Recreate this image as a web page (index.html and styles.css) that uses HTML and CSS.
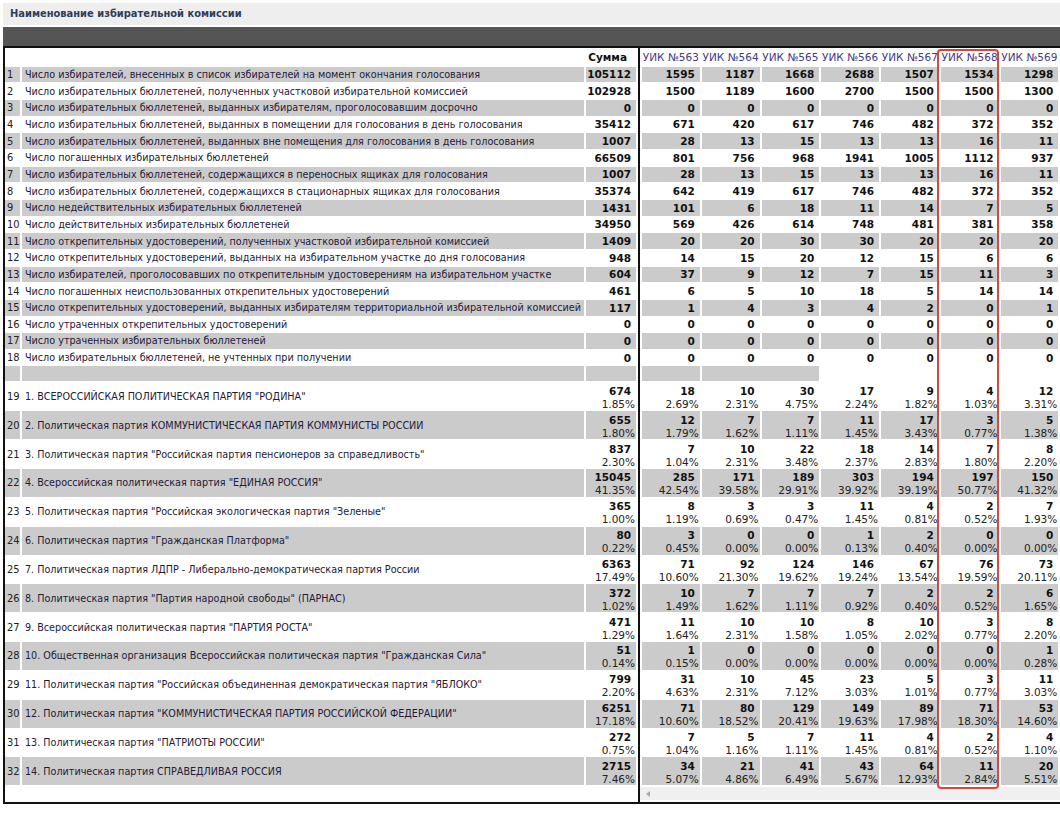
FILE: index.html
```html
<!DOCTYPE html>
<html lang="ru">
<head>
<meta charset="utf-8">
<title>Наименование избирательной комиссии</title>
<link rel="stylesheet" href="styles.css">
</head>
<body>
<div class="page">
  <div class="title">Наименование избирательной комиссии</div>
  <div class="bar"></div>
  <div class="box">
    <div class="left">
      <table class="lt">
        <colgroup><col class="c-n"><col class="c-name"><col class="c-sum"></colgroup>
        <tr class="head"><td></td><td></td><td class="v"><b>Сумма</b></td></tr>
        <tr class="r g"><td class="n">1</td><td class="name">Число избирателей, внесенных в список избирателей на момент окончания голосования</td><td class="v">105112</td></tr>
        <tr class="r"><td class="n">2</td><td class="name">Число избирательных бюллетеней, полученных участковой избирательной комиссией</td><td class="v">102928</td></tr>
        <tr class="r g"><td class="n">3</td><td class="name">Число избирательных бюллетеней, выданных избирателям, проголосовавшим досрочно</td><td class="v">0</td></tr>
        <tr class="r"><td class="n">4</td><td class="name">Число избирательных бюллетеней, выданных в помещении для голосования в день голосования</td><td class="v">35412</td></tr>
        <tr class="r g"><td class="n">5</td><td class="name">Число избирательных бюллетеней, выданных вне помещения для голосования в день голосования</td><td class="v">1007</td></tr>
        <tr class="r"><td class="n">6</td><td class="name">Число погашенных избирательных бюллетеней</td><td class="v">66509</td></tr>
        <tr class="r g"><td class="n">7</td><td class="name">Число избирательных бюллетеней, содержащихся в переносных ящиках для голосования</td><td class="v">1007</td></tr>
        <tr class="r"><td class="n">8</td><td class="name">Число избирательных бюллетеней, содержащихся в стационарных ящиках для голосования</td><td class="v">35374</td></tr>
        <tr class="r g"><td class="n">9</td><td class="name">Число недействительных избирательных бюллетеней</td><td class="v">1431</td></tr>
        <tr class="r"><td class="n">10</td><td class="name">Число действительных избирательных бюллетеней</td><td class="v">34950</td></tr>
        <tr class="r g"><td class="n">11</td><td class="name">Число открепительных удостоверений, полученных участковой избирательной комиссией</td><td class="v">1409</td></tr>
        <tr class="r"><td class="n">12</td><td class="name">Число открепительных удостоверений, выданных на избирательном участке до дня голосования</td><td class="v">948</td></tr>
        <tr class="r g"><td class="n">13</td><td class="name">Число избирателей, проголосовавших по открепительным удостоверениям на избирательном участке</td><td class="v">604</td></tr>
        <tr class="r"><td class="n">14</td><td class="name">Число погашенных неиспользованных открепительных удостоверений</td><td class="v">461</td></tr>
        <tr class="r g"><td class="n">15</td><td class="name">Число открепительных удостоверений, выданных избирателям территориальной избирательной комиссией</td><td class="v">117</td></tr>
        <tr class="r"><td class="n">16</td><td class="name">Число утраченных открепительных удостоверений</td><td class="v">0</td></tr>
        <tr class="r g"><td class="n">17</td><td class="name">Число утраченных избирательных бюллетеней</td><td class="v">0</td></tr>
        <tr class="r"><td class="n">18</td><td class="name">Число избирательных бюллетеней, не учтенных при получении</td><td class="v">0</td></tr>
        <tr class="sep g"><td></td><td></td><td></td></tr>
        <tr class="p"><td class="n">19</td><td class="name">1. ВСЕРОССИЙСКАЯ ПОЛИТИЧЕСКАЯ ПАРТИЯ "РОДИНА"</td><td class="v"><b>674</b><i>1.85%</i></td></tr>
        <tr class="p g"><td class="n">20</td><td class="name">2. Политическая партия КОММУНИСТИЧЕСКАЯ ПАРТИЯ КОММУНИСТЫ РОССИИ</td><td class="v"><b>655</b><i>1.80%</i></td></tr>
        <tr class="p"><td class="n">21</td><td class="name">3. Политическая партия "Российская партия пенсионеров за справедливость"</td><td class="v"><b>837</b><i>2.30%</i></td></tr>
        <tr class="p g"><td class="n">22</td><td class="name">4. Всероссийская политическая партия "ЕДИНАЯ РОССИЯ"</td><td class="v"><b>15045</b><i>41.35%</i></td></tr>
        <tr class="p"><td class="n">23</td><td class="name">5. Политическая партия "Российская экологическая партия "Зеленые"</td><td class="v"><b>365</b><i>1.00%</i></td></tr>
        <tr class="p g"><td class="n">24</td><td class="name">6. Политическая партия "Гражданская Платформа"</td><td class="v"><b>80</b><i>0.22%</i></td></tr>
        <tr class="p"><td class="n">25</td><td class="name">7. Политическая партия ЛДПР - Либерально-демократическая партия России</td><td class="v"><b>6363</b><i>17.49%</i></td></tr>
        <tr class="p g"><td class="n">26</td><td class="name">8. Политическая партия "Партия народной свободы" (ПАРНАС)</td><td class="v"><b>372</b><i>1.02%</i></td></tr>
        <tr class="p"><td class="n">27</td><td class="name">9. Всероссийская политическая партия "ПАРТИЯ РОСТА"</td><td class="v"><b>471</b><i>1.29%</i></td></tr>
        <tr class="p g"><td class="n">28</td><td class="name">10. Общественная организация Всероссийская политическая партия "Гражданская Сила"</td><td class="v"><b>51</b><i>0.14%</i></td></tr>
        <tr class="p"><td class="n">29</td><td class="name">11. Политическая партия "Российская объединенная демократическая партия "ЯБЛОКО"</td><td class="v"><b>799</b><i>2.20%</i></td></tr>
        <tr class="p g"><td class="n">30</td><td class="name">12. Политическая партия "КОММУНИСТИЧЕСКАЯ ПАРТИЯ РОССИЙСКОЙ ФЕДЕРАЦИИ"</td><td class="v"><b>6251</b><i>17.18%</i></td></tr>
        <tr class="p"><td class="n">31</td><td class="name">13. Политическая партия "ПАТРИОТЫ РОССИИ"</td><td class="v"><b>272</b><i>0.75%</i></td></tr>
        <tr class="p g"><td class="n">32</td><td class="name">14. Политическая партия СПРАВЕДЛИВАЯ РОССИЯ</td><td class="v"><b>2715</b><i>7.46%</i></td></tr>
      </table>
    </div>
    <div class="scroll">
      <table class="rt">
        <colgroup><col><col><col><col><col><col><col></colgroup>
        <tr class="head"><td>УИК №563</td><td>УИК №564</td><td>УИК №565</td><td>УИК №566</td><td>УИК №567</td><td>УИК №568</td><td>УИК №569</td></tr>
        <tr class="r g"><td>1595</td><td>1187</td><td>1668</td><td>2688</td><td>1507</td><td>1534</td><td>1298</td></tr>
        <tr class="r"><td>1500</td><td>1189</td><td>1600</td><td>2700</td><td>1500</td><td>1500</td><td>1300</td></tr>
        <tr class="r g"><td>0</td><td>0</td><td>0</td><td>0</td><td>0</td><td>0</td><td>0</td></tr>
        <tr class="r"><td>671</td><td>420</td><td>617</td><td>746</td><td>482</td><td>372</td><td>352</td></tr>
        <tr class="r g"><td>28</td><td>13</td><td>15</td><td>13</td><td>13</td><td>16</td><td>11</td></tr>
        <tr class="r"><td>801</td><td>756</td><td>968</td><td>1941</td><td>1005</td><td>1112</td><td>937</td></tr>
        <tr class="r g"><td>28</td><td>13</td><td>15</td><td>13</td><td>13</td><td>16</td><td>11</td></tr>
        <tr class="r"><td>642</td><td>419</td><td>617</td><td>746</td><td>482</td><td>372</td><td>352</td></tr>
        <tr class="r g"><td>101</td><td>6</td><td>18</td><td>11</td><td>14</td><td>7</td><td>5</td></tr>
        <tr class="r"><td>569</td><td>426</td><td>614</td><td>748</td><td>481</td><td>381</td><td>358</td></tr>
        <tr class="r g"><td>20</td><td>20</td><td>30</td><td>30</td><td>20</td><td>20</td><td>20</td></tr>
        <tr class="r"><td>14</td><td>15</td><td>20</td><td>12</td><td>15</td><td>6</td><td>6</td></tr>
        <tr class="r g"><td>37</td><td>9</td><td>12</td><td>7</td><td>15</td><td>11</td><td>3</td></tr>
        <tr class="r"><td>6</td><td>5</td><td>10</td><td>18</td><td>5</td><td>14</td><td>14</td></tr>
        <tr class="r g"><td>1</td><td>4</td><td>3</td><td>4</td><td>2</td><td>0</td><td>1</td></tr>
        <tr class="r"><td>0</td><td>0</td><td>0</td><td>0</td><td>0</td><td>0</td><td>0</td></tr>
        <tr class="r g"><td>0</td><td>0</td><td>0</td><td>0</td><td>0</td><td>0</td><td>0</td></tr>
        <tr class="r"><td>0</td><td>0</td><td>0</td><td>0</td><td>0</td><td>0</td><td>0</td></tr>
        <tr class="sep"><td class="gc"></td><td class="gc" colspan="2"></td><td></td><td></td><td></td><td></td></tr>
        <tr class="p"><td><b>18</b><i>2.69%</i></td><td><b>10</b><i>2.31%</i></td><td><b>30</b><i>4.75%</i></td><td><b>17</b><i>2.24%</i></td><td><b>9</b><i>1.82%</i></td><td><b>4</b><i>1.03%</i></td><td><b>12</b><i>3.31%</i></td></tr>
        <tr class="p g"><td><b>12</b><i>1.79%</i></td><td><b>7</b><i>1.62%</i></td><td><b>7</b><i>1.11%</i></td><td><b>11</b><i>1.45%</i></td><td><b>17</b><i>3.43%</i></td><td><b>3</b><i>0.77%</i></td><td><b>5</b><i>1.38%</i></td></tr>
        <tr class="p"><td><b>7</b><i>1.04%</i></td><td><b>10</b><i>2.31%</i></td><td><b>22</b><i>3.48%</i></td><td><b>18</b><i>2.37%</i></td><td><b>14</b><i>2.83%</i></td><td><b>7</b><i>1.80%</i></td><td><b>8</b><i>2.20%</i></td></tr>
        <tr class="p g"><td><b>285</b><i>42.54%</i></td><td><b>171</b><i>39.58%</i></td><td><b>189</b><i>29.91%</i></td><td><b>303</b><i>39.92%</i></td><td><b>194</b><i>39.19%</i></td><td><b>197</b><i>50.77%</i></td><td><b>150</b><i>41.32%</i></td></tr>
        <tr class="p"><td><b>8</b><i>1.19%</i></td><td><b>3</b><i>0.69%</i></td><td><b>3</b><i>0.47%</i></td><td><b>11</b><i>1.45%</i></td><td><b>4</b><i>0.81%</i></td><td><b>2</b><i>0.52%</i></td><td><b>7</b><i>1.93%</i></td></tr>
        <tr class="p g"><td><b>3</b><i>0.45%</i></td><td><b>0</b><i>0.00%</i></td><td><b>0</b><i>0.00%</i></td><td><b>1</b><i>0.13%</i></td><td><b>2</b><i>0.40%</i></td><td><b>0</b><i>0.00%</i></td><td><b>0</b><i>0.00%</i></td></tr>
        <tr class="p"><td><b>71</b><i>10.60%</i></td><td><b>92</b><i>21.30%</i></td><td><b>124</b><i>19.62%</i></td><td><b>146</b><i>19.24%</i></td><td><b>67</b><i>13.54%</i></td><td><b>76</b><i>19.59%</i></td><td><b>73</b><i>20.11%</i></td></tr>
        <tr class="p g"><td><b>10</b><i>1.49%</i></td><td><b>7</b><i>1.62%</i></td><td><b>7</b><i>1.11%</i></td><td><b>7</b><i>0.92%</i></td><td><b>2</b><i>0.40%</i></td><td><b>2</b><i>0.52%</i></td><td><b>6</b><i>1.65%</i></td></tr>
        <tr class="p"><td><b>11</b><i>1.64%</i></td><td><b>10</b><i>2.31%</i></td><td><b>10</b><i>1.58%</i></td><td><b>8</b><i>1.05%</i></td><td><b>10</b><i>2.02%</i></td><td><b>3</b><i>0.77%</i></td><td><b>8</b><i>2.20%</i></td></tr>
        <tr class="p g"><td><b>1</b><i>0.15%</i></td><td><b>0</b><i>0.00%</i></td><td><b>0</b><i>0.00%</i></td><td><b>0</b><i>0.00%</i></td><td><b>0</b><i>0.00%</i></td><td><b>0</b><i>0.00%</i></td><td><b>1</b><i>0.28%</i></td></tr>
        <tr class="p"><td><b>31</b><i>4.63%</i></td><td><b>10</b><i>2.31%</i></td><td><b>45</b><i>7.12%</i></td><td><b>23</b><i>3.03%</i></td><td><b>5</b><i>1.01%</i></td><td><b>3</b><i>0.77%</i></td><td><b>11</b><i>3.03%</i></td></tr>
        <tr class="p g"><td><b>71</b><i>10.60%</i></td><td><b>80</b><i>18.52%</i></td><td><b>129</b><i>20.41%</i></td><td><b>149</b><i>19.63%</i></td><td><b>89</b><i>17.98%</i></td><td><b>71</b><i>18.30%</i></td><td><b>53</b><i>14.60%</i></td></tr>
        <tr class="p"><td><b>7</b><i>1.04%</i></td><td><b>5</b><i>1.16%</i></td><td><b>7</b><i>1.11%</i></td><td><b>11</b><i>1.45%</i></td><td><b>4</b><i>0.81%</i></td><td><b>2</b><i>0.52%</i></td><td><b>4</b><i>1.10%</i></td></tr>
        <tr class="p g"><td><b>34</b><i>5.07%</i></td><td><b>21</b><i>4.86%</i></td><td><b>41</b><i>6.49%</i></td><td><b>43</b><i>5.67%</i></td><td><b>64</b><i>12.93%</i></td><td><b>11</b><i>2.84%</i></td><td><b>20</b><i>5.51%</i></td></tr>
      </table>
      <div class="hbar"><span class="arrow"></span></div>
    </div>
    <div class="hl"></div>
  </div>
</div>
</body>
</html>
```
FILE: styles.css
```css
html, body {
  margin: 0;
  padding: 0;
  overflow: hidden;
  background: #fff;
}
.page {
  width: 1064px;
  padding: 3px 0 0 3px;
  font-family: "DejaVu Sans", Verdana, sans-serif;
  color: #111;
}
.title {
  height: 22px;
  line-height: 22px;
  background: #eeeeee;
  color: #2f3d5c;
  font-family: "DejaVu Sans Condensed", "DejaVu Sans", sans-serif;
  font-weight: bold;
  font-size: 11px;
  padding-left: 7px;
}
.bar {
  height: 19px;
  margin-top: 2px;
  background: #555555;
}
.box {
  position: relative;
  display: flex;
  height: 754px;
  border: 2px solid #111;
  border-right: none;
}
.left {
  flex: none;
  margin-left: -2px;
}
table {
  border-collapse: separate;
  border-spacing: 2px 1px;
  table-layout: fixed;
}
td {
  padding: 0;
  white-space: nowrap;
  overflow: hidden;
  vertical-align: middle;
}
.lt { width: 634px; }
.c-n { width: 15px; }
.c-name { width: 562px; }
.c-sum { width: 50px; }
.rt { width: 420px; }
.rt col { width: 57.75px; }

tr.head td { height: 16.67px; }
tr.r td { height: 15.67px; }
tr.sep td { height: 15px; }
tr.p td { height: 27.85px; }

tr.g td, td.gc { background: #cbcbcb; }

.n {
  font-family: "DejaVu Sans Condensed", "Liberation Sans", sans-serif;
  font-size: 11px;
  padding-left: 2px;
  color: #222;
}
.name {
  font-family: "DejaVu Sans Condensed", "Liberation Sans", sans-serif;
  font-size: 10.7px;
  padding-left: 3px;
  color: #241a3a;
}
.v, .rt td {
  text-align: right;
  font-size: 10.5px;
  font-weight: bold;
  padding-right: 5px;
  color: #111;
}
.rt tr.head td {
  text-align: center;
  font-weight: normal;
  color: #46388c;
  padding-right: 0;
}
tr.p .v, .rt tr.p td {
  padding-right: 1px;
  line-height: 12.5px;
}
tr.p .v b, .rt tr.p td b {
  position: relative;
  top: 1px;
}
tr.p .v i, .rt tr.p td i {
  position: relative;
  top: 1.5px;
}
td b {
  display: block;
  font-weight: bold;
  padding-right: 4px;
}
td i {
  display: block;
  font-style: normal;
  font-weight: normal;
  color: #222;
}
.scroll {
  flex: 1;
  display: flex;
  flex-direction: column;
  border-left: 2px solid #111;
  overflow: hidden;
}
.hbar {
  height: 13px;
  margin-top: 1px;
  background: #f0f0f0;
  display: flex;
  align-items: center;
}
.arrow {
  margin-left: 6px;
  width: 0;
  height: 0;
  border-top: 3px solid transparent;
  border-bottom: 3px solid transparent;
  border-right: 4px solid #a8a8a8;
}
.hl {
  position: absolute;
  left: 932px;
  top: 1px;
  width: 62px;
  height: 740px;
  box-sizing: border-box;
  border: 2px solid #e4433a;
  border-radius: 4px;
}
```
